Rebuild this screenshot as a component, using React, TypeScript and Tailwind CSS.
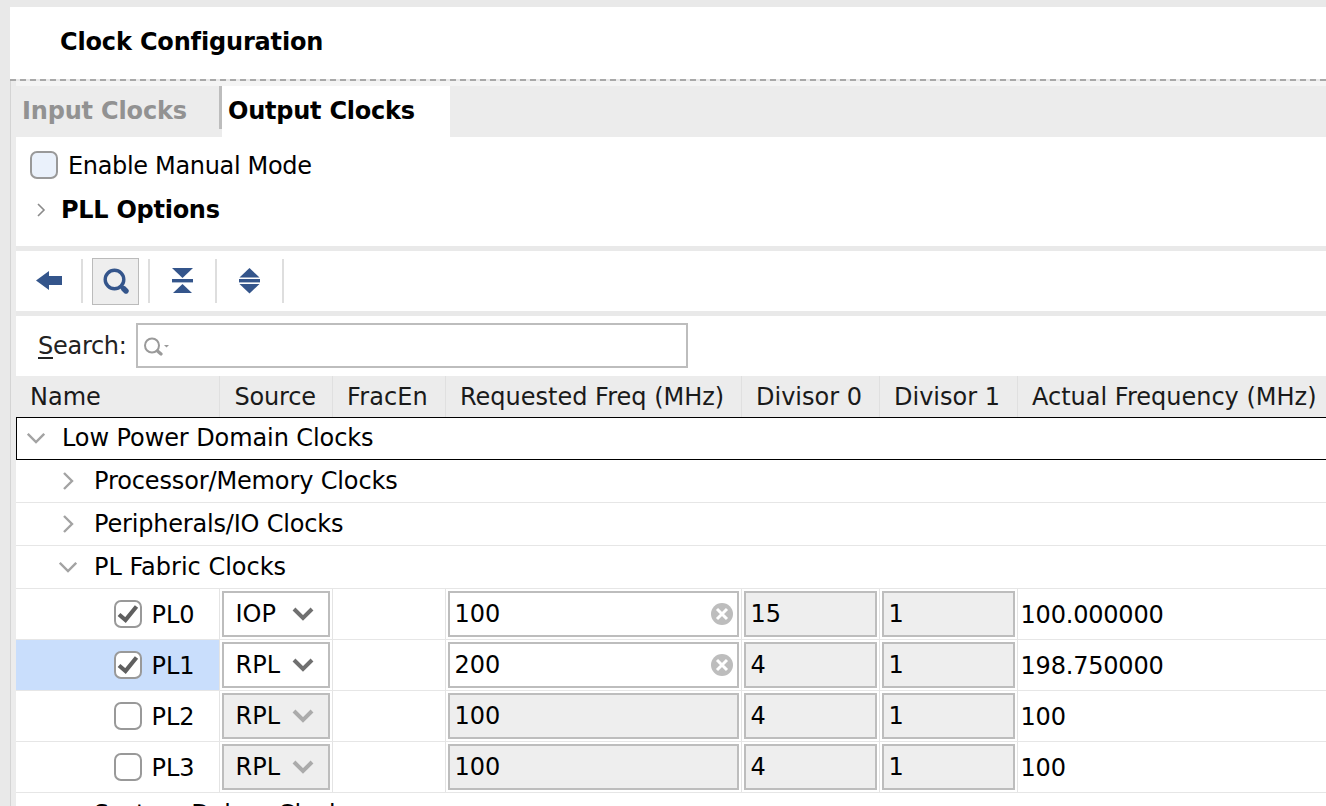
import React from "react";

const Chev = ({ open }: { open?: boolean }) => (
  <svg width="18" height="18" viewBox="0 0 18 18" className="shrink-0" fill="none" stroke="#a3a3a3" strokeWidth="2.4">
    {open ? <polyline points="0.8,4.8 9,13 17.2,4.8" /> : <polyline points="5,1 13,9 5,17" />}
  </svg>
);

const Check = ({ on }: { on?: boolean }) => (
  <span className="w-[28px] h-[28px] border-2 border-[#999999] rounded-[7px] bg-white flex items-center justify-center shrink-0">
    {on && (
      <svg width="24" height="24" viewBox="0 0 24 24" fill="none" stroke="#5f5f5f" strokeWidth="4.2">
        <polyline points="3,12.5 9.5,18 20.5,4.5" />
      </svg>
    )}
  </span>
);

const Sep = () => <div className="w-[2px] h-[44px] bg-[#dedede] shrink-0" />;

const Clear = () => (
  <svg width="22" height="22" viewBox="0 0 22 22" className="shrink-0">
    <circle cx="11" cy="11" r="11" fill="#bdbdbd" />
    <path d="M6 6 16 16 M16 6 6 16" stroke="#fff" strokeWidth="3" />
  </svg>
);

const W = {
  name: "w-[204px]",
  src: "w-[113px]",
  frac: "w-[113px]",
  req: "w-[296px]",
  div: "w-[138px]",
};

const Box = ({ off, children, className }: { off?: boolean; children?: React.ReactNode; className?: string }) => (
  <div className={`h-[46px] border-2 border-[#bdbdbd] flex items-center ${off ? "bg-[#eeeeee]" : "bg-white"} ${className ?? ""}`}>
    {children}
  </div>
);

const rows = [
  { n: "PL0", on: true, s: "IOP", req: "100", d0: "15", a: "100.000000" },
  { n: "PL1", on: true, s: "RPL", req: "200", d0: "4", a: "198.750000", sel: true },
  { n: "PL2", on: false, s: "RPL", req: "100", d0: "4", a: "100" },
  { n: "PL3", on: false, s: "RPL", req: "100", d0: "4", a: "100" },
];

const Cell = ({ w, children }: { w: string; children?: React.ReactNode }) => (
  <div className={`${w} shrink-0 border-r border-[#e4e4e4] flex items-center px-[2px]`}>{children}</div>
);

const Head = ({ w, children, className }: { w: string; children: React.ReactNode; className?: string }) => (
  <div className={`${w} shrink-0 border-r border-[#e0e0e0] flex items-center whitespace-nowrap ${className ?? "pl-[14px]"}`}>{children}</div>
);

const Tree = ({ label, open, track }: { label: string; open?: boolean; track?: string }) => (
  <div className="h-[43px] border-b border-[#e6e6e6] flex items-center pl-[43px]">
    <Chev open={open} />
    <span className={`ml-[17px] whitespace-nowrap ${track ?? ""}`}>{label}</span>
  </div>
);

export default function App() {
  return (
    <div className="w-[1326px] h-[806px] overflow-hidden bg-[#e9e9e9] pt-[7px] pl-[10px] font-['DejaVu_Sans',sans-serif] text-[24px] text-black flex flex-col">
      <div className="h-[72px] bg-white shrink-0 flex items-center pl-[50px] pb-[3px] font-bold tracking-[-0.16px]">Clock Configuration</div>
      <div className="h-[2px] shrink-0 border-t-2 border-dashed border-[#a8a8a8]" />
      <div className="flex-1 flex min-h-0">
        <div className="w-[6px] shrink-0 bg-[#ececec] border-l border-[#d4d4d4]" />
        <div className="flex-1 min-w-0 flex flex-col">
          <div className="h-[5px] shrink-0 bg-[#f4f4f4]" />
          <div className="h-[51px] shrink-0 bg-[#ececec] flex font-bold">
            <div className="w-[206px] flex items-center pl-[6px] pb-[2px] text-[#929292] relative tracking-[-0.17px]">
              Input Clocks
              <span className="absolute right-0 top-0 w-[3px] h-[43px] bg-[#bdbdbd]" />
            </div>
            <div className="w-[228px] bg-white flex items-center pl-[6px] pb-[2px] tracking-[-0.23px]">Output Clocks</div>
          </div>
          <div className="h-[109px] shrink-0 bg-white">
            <div className="flex items-center h-[28px] mt-[14px] pl-[14px]">
              <span className="w-[28px] h-[28px] border-2 border-[#999999] rounded-[7px] bg-[#eaf1fb] shrink-0" />
              <span className="ml-[10px] pt-[2px] tracking-[-0.33px]">Enable Manual Mode</span>
            </div>
            <div className="flex items-center mt-[13px] pl-[20px] font-bold">
              <svg width="10" height="14" viewBox="0 0 10 14" className="shrink-0" fill="none" stroke="#8a8a8a" strokeWidth="1.6">
                <polyline points="2,1 8,7 2,13" />
              </svg>
              <span className="ml-[15px] tracking-[-0.27px]">PLL Options</span>
            </div>
          </div>
          <div className="h-[5px] shrink-0 bg-[#e9e9e9]" />
          <div className="h-[60px] shrink-0 bg-white flex items-center">
            <svg width="26" height="20" viewBox="0 0 26 20" className="ml-[20px]" fill="#34558b">
              <polygon points="0,9.5 13,0 13,5 26,5 26,14 13,14 13,19" />
            </svg>
            <div className="ml-[19px]"><Sep /></div>
            <div className="ml-[9px] w-[47px] h-[47px] bg-[#eeeeee] border border-[#bbbbbb] flex items-center justify-center">
              <svg width="28" height="28" viewBox="0 0 28 28" fill="none" stroke="#34558b">
                <circle cx="12.5" cy="12.5" r="9.3" strokeWidth="3.4" />
                <line x1="21.5" y1="21.5" x2="24" y2="24" strokeWidth="5.4" strokeLinecap="round" />
              </svg>
            </div>
            <div className="ml-[9px]"><Sep /></div>
            <svg width="21" height="26" viewBox="0 0 21 26" className="ml-[22px]" fill="#34558b">
              <polygon points="0,0 21,0 10.5,10 " />
              <rect x="0" y="11" width="21" height="3.4" />
              <polygon points="1,25 20,25 10.5,16" />
            </svg>
            <div className="ml-[22px]"><Sep /></div>
            <svg width="21" height="26" viewBox="0 0 21 26" className="ml-[22px]" fill="#34558b">
              <polygon points="0.5,9.5 20.5,9.5 10.5,0" />
              <rect x="0" y="11" width="21" height="3.4" />
              <polygon points="0.5,16 20.5,16 10.5,25.5" />
            </svg>
            <div className="ml-[22px]"><Sep /></div>
          </div>
          <div className="h-[5px] shrink-0 bg-[#e9e9e9]" />
          <div className="h-[60px] shrink-0 bg-white flex items-center pl-[22px]">
            <span className="text-[#222222] tracking-[-0.28px]"><span className="underline underline-offset-[3px]">S</span>earch:</span>
            <div className="ml-[9px] w-[552px] h-[45px] self-start mt-[7px] border-2 border-[#bdbdbd] flex items-center pl-[6px]">
              <svg width="26" height="20" viewBox="0 0 26 20" fill="none" stroke="#9a9a9a">
                <circle cx="8" cy="9.5" r="7" strokeWidth="2" />
                <line x1="13.5" y1="15" x2="17" y2="18" strokeWidth="3.2" strokeLinecap="round" />
                <polygon points="20,9 25,9 22.5,11.5" fill="#9a9a9a" stroke="none" />
              </svg>
            </div>
          </div>
          <div className="h-[41px] shrink-0 bg-[#ececec] flex text-[#1a1a1a]">
            <Head w={W.name}>{"Name"}</Head>
            <Head w={W.src} className="pl-[14.5px] tracking-[-0.2px]">Source</Head>
            <Head w={W.frac} className="pl-[14px] tracking-[0.1px]">FracEn</Head>
            <Head w={W.req}>Requested Freq (MHz)</Head>
            <Head w={W.div}>Divisor 0</Head>
            <Head w={W.div}>Divisor 1</Head>
            <div className="flex-1 flex items-center pl-[14px] whitespace-nowrap">Actual Frequency (MHz)</div>
          </div>
          <div className="bg-white flex-1 min-h-0">
            <div className="h-[43px] border border-black flex items-center pl-[10px] pb-[2px] mr-[-2px]">
              <Chev open />
              <span className="ml-[17px] whitespace-nowrap tracking-[-0.09px]">Low Power Domain Clocks</span>
            </div>
            <Tree label="Processor/Memory Clocks" track="tracking-[-0.13px]" />
            <Tree label="Peripherals/IO Clocks" track="tracking-[-0.19px]" />
            <Tree label="PL Fabric Clocks" open />
            {rows.map((r) => (
              <div key={r.n} className="h-[51px] border-b border-[#e6e6e6] flex">
                <div className={`${W.name} shrink-0 border-r border-[#e4e4e4] flex items-center pl-[98px] ${r.sel ? "bg-[#c9defc]" : ""}`}>
                  <Check on={r.on} />
                  <span className="ml-[9.5px] pt-[2px]">{r.n}</span>
                </div>
                <Cell w={W.src}>
                  <Box off={!r.on} className="w-[108px] pl-[11.5px] pr-[14px] justify-between">
                    <span>{r.s}</span>
                    <svg width="22" height="14" viewBox="0 0 22 14" className="shrink-0" fill="none" stroke={r.on ? "#707070" : "#ababab"} strokeWidth="4">
                      <polyline points="2,2 11,11 20,2" />
                    </svg>
                  </Box>
                </Cell>
                <Cell w={W.frac} />
                <Cell w={W.req}>
                  <Box off={!r.on} className="w-[291px] pl-[4.5px] pr-[4px] justify-between">
                    <span>{r.req}</span>
                    {r.on && <Clear />}
                  </Box>
                </Cell>
                <Cell w={W.div}>
                  <Box off className="w-[133px] pl-[4.5px]">{r.d0}</Box>
                </Cell>
                <Cell w={W.div}>
                  <Box off className="w-[133px] pl-[4.5px]">1</Box>
                </Cell>
                <div className="flex-1 flex items-center pl-[2.5px] pt-[2px] tracking-[-0.2px]">{r.a}</div>
              </div>
            ))}
            <Tree label="System Debug Clocks" open />
          </div>
        </div>
      </div>
    </div>
  );
}
